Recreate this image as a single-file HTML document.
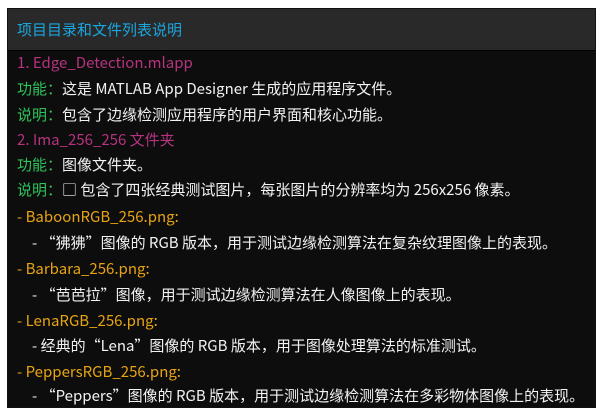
<!DOCTYPE html><html><head><meta charset="utf-8"><style>
body{margin:0;background:#fff;width:603px;height:413px;overflow:hidden;font-family:"Noto Sans CJK SC",sans-serif;}
.box{position:absolute;left:7px;top:8px;width:589px;height:400px;background:#0d0d0d;border:1px solid #111;box-sizing:border-box;}
.hd{height:41px;background:#292929;border-bottom:1px solid #000;color:#1aa6e0;font-size:15px;line-height:41px;padding-left:9px;}
.l{position:absolute;left:9px;font-size:15px;color:#f2f2f2;white-space:nowrap;line-height:20px;}
.m{color:#b5337f}.g{color:#2ec45a}.y{color:#e6a413}
</style></head><body><div class="box"><div class="hd">项目目录和文件列表说明</div>
<div class="l m" style="top:44px">1. Edge_Detection.mlapp</div>
<div class="l" style="top:70px"><span class="g">功能：</span>这是 MATLAB App Designer 生成的应用程序文件。</div>
<div class="l" style="top:96px"><span class="g">说明：</span>包含了边缘检测应用程序的用户界面和核心功能。</div>
<div class="l m" style="top:121px">2. Ima_256_256 文件夹</div>
<div class="l" style="top:146px"><span class="g">功能：</span>图像文件夹。</div>
<div class="l" style="top:171px"><span class="g">说明：</span>□ 包含了四张经典测试图片，每张图片的分辨率均为 256x256 像素。</div>
<div class="l y" style="top:198px">- BaboonRGB_256.png:</div>
<div class="l" style="top:224px;left:24px">- “狒狒”图像的 RGB 版本，用于测试边缘检测算法在复杂纹理图像上的表现。</div>
<div class="l y" style="top:250px">- Barbara_256.png:</div>
<div class="l" style="top:276px;left:24px">- “芭芭拉”图像，用于测试边缘检测算法在人像图像上的表现。</div>
<div class="l y" style="top:302px">- LenaRGB_256.png:</div>
<div class="l" style="top:327px;left:24px">- 经典的“Lena”图像的 RGB 版本，用于图像处理算法的标准测试。</div>
<div class="l y" style="top:353px">- PeppersRGB_256.png:</div>
<div class="l" style="top:377px;left:24px">- “Peppers”图像的 RGB 版本，用于测试边缘检测算法在多彩物体图像上的表现。</div>
</div></body></html>
